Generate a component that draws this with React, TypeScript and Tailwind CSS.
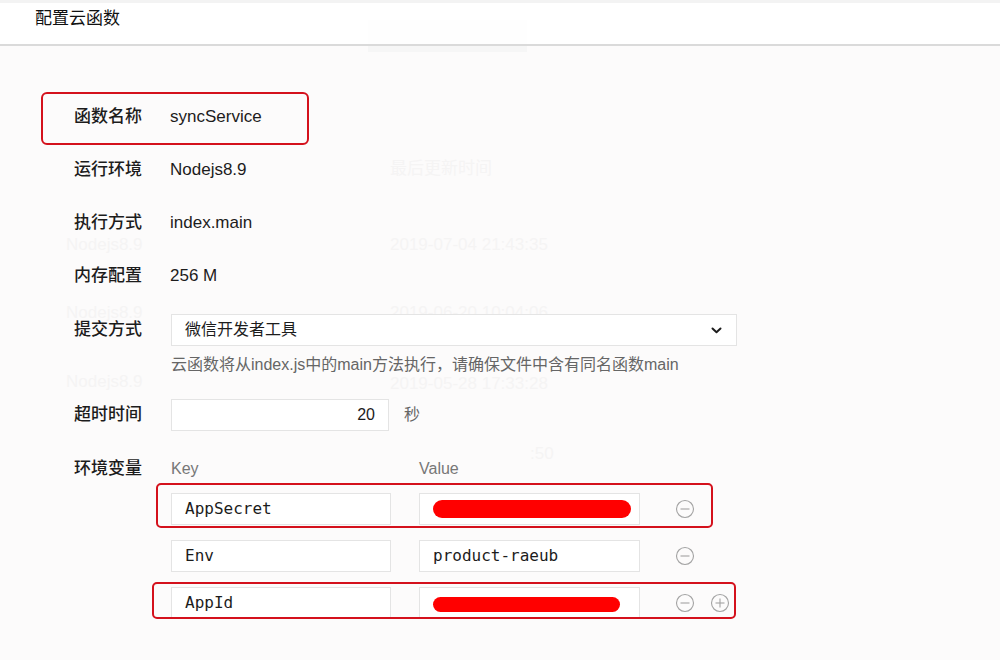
import React from 'react';

const cjk = { fontFamily: '"Liberation Sans", "Noto Sans CJK SC", sans-serif' };
const mono = { fontFamily: '"DejaVu Sans Mono", "Liberation Mono", monospace' };

interface EnvVar {
  key: string;
  value: string;
  redacted?: 'long' | 'short';
  canAdd?: boolean;
}

const envVars: EnvVar[] = [
  { key: 'AppSecret', value: '', redacted: 'long' },
  { key: 'Env', value: 'product-raeub' },
  { key: 'AppId', value: '', redacted: 'short', canAdd: true },
];

const infoRows = [
  { label: '函数名称', value: 'syncService' },
  { label: '运行环境', value: 'Nodejs8.9' },
  { label: '执行方式', value: 'index.main' },
  { label: '内存配置', value: '256 M' },
];

// faint text from the table behind the dialog
const ghosts = [
  { text: '最后更新时间', x: 390, y: 158 },
  { text: 'Nodejs8.9', x: 66, y: 234 },
  { text: '2019-07-04 21:43:35', x: 390, y: 234 },
  { text: 'Nodejs8.9', x: 66, y: 302 },
  { text: '2019-06-20 10:04:06', x: 390, y: 302 },
  { text: 'Nodejs8.9', x: 66, y: 371 },
  { text: '2019-05-28 17:33:28', x: 390, y: 373 },
  { text: ':50', x: 530, y: 443 },
];

function CircleIcon({ plus }: { plus?: boolean }) {
  return (
    <svg width="20" height="20" viewBox="0 0 20 20" fill="none" stroke="#a3a3a3" strokeWidth={1.1}>
      <circle cx="10" cy="10" r="8.5" />
      <line x1="5.5" y1="10" x2="14.5" y2="10" />
      {plus && <line x1="10" y1="5.5" x2="10" y2="14.5" />}
    </svg>
  );
}

function Label({ children }: { children: React.ReactNode }) {
  return (
    <div className="w-[96px] shrink-0 text-[17px] font-medium text-[#1c1c1c]" style={cjk}>
      {children}
    </div>
  );
}

export default function App() {
  return (
    <div className="relative w-[1000px] h-[660px] overflow-hidden bg-[#fcfbfb]" style={cjk}>
      {ghosts.map((g, i) => (
        <div
          key={i}
          className="absolute text-[17px] leading-[22px] text-[#f5f4f4] whitespace-nowrap"
          style={{ left: g.x, top: g.y }}
        >
          {g.text}
        </div>
      ))}
      <div className="absolute left-[368px] top-[20px] w-[159px] h-[32px] bg-[#f6f6f6]" />

      <div className="relative h-[46px] border-t-[3px] border-t-[#f3f3f3] border-b-2 border-b-[#dadada] bg-white/90 px-[35px] pt-[5px]">
        <div className="text-[17px] leading-[22px] text-[#111]">配置云函数</div>
      </div>

      <div className="relative pl-[74px] pt-[44px]">
        {infoRows.map((r) => (
          <div key={r.label} className="flex h-[53px] items-center">
            <Label>{r.label}</Label>
            <div className="text-[17px] text-[#1c1c1c]">{r.value}</div>
          </div>
        ))}

        <div className="mt-[12px] flex items-center">
          <Label>提交方式</Label>
          <div className="ml-[1px] flex h-[32px] w-[566px] items-center justify-between border border-[#e4e4e4] bg-white pl-[13px] pr-[14px]">
            <span className="text-[16px] text-[#1c1c1c]">微信开发者工具</span>
            <svg width="11" height="7" viewBox="0 0 11 7" fill="none" stroke="#1c1c1c" strokeWidth={2} strokeLinecap="round" strokeLinejoin="round">
              <polyline points="1.5,1.5 5.5,5.2 9.5,1.5" />
            </svg>
          </div>
        </div>
        <div className="mt-[8px] pl-[97px] text-[16px] leading-[22px] text-[#666]">
          云函数将从index.js中的main方法执行，请确保文件中含有同名函数main
        </div>

        <div className="mt-[23px] flex items-center">
          <Label>超时时间</Label>
          <div className="ml-[1px] flex h-[32px] w-[218px] items-center justify-end border border-[#e4e4e4] bg-white pr-[13px] text-[16px] text-[#1c1c1c]">
            20
          </div>
          <span className="ml-[15px] text-[16px] text-[#666]">秒</span>
        </div>

        <div className="mt-[27px] flex h-[22px] items-center">
          <Label>环境变量</Label>
          <div className="ml-[1px] w-[248px] text-[16px] text-[#777]">Key</div>
          <div className="text-[16px] text-[#777]">Value</div>
        </div>

        <div className="mt-[13px] flex flex-col gap-[15px] pl-[97px]">
          {envVars.map((v) => (
            <div key={v.key} className="flex items-center">
              <div className="flex h-[32px] w-[220px] items-center border border-[#e4e4e4] bg-white pl-[13px] text-[16px] text-[#1c1c1c]" style={mono}>
                {v.key}
              </div>
              <div className="relative ml-[28px] flex h-[32px] w-[221px] items-center border border-[#e4e4e4] bg-white pl-[13px] text-[16px] text-[#1c1c1c]" style={mono}>
                {v.value}
                {v.redacted === 'long' && (
                  <div className="absolute left-[13px] top-[6px] h-[18px] w-[198px] rounded-full bg-[#ff0000]" />
                )}
                {v.redacted === 'short' && (
                  <div className="absolute left-[13px] top-[9px] h-[15px] w-[187px] rounded-full bg-[#ff0000]" />
                )}
              </div>
              <div className="ml-[35px] flex items-center gap-[15px]">
                <CircleIcon />
                {v.canAdd && <CircleIcon plus />}
              </div>
            </div>
          ))}
        </div>
      </div>

      {/* annotation boxes */}
      <div className="absolute left-[41px] top-[92px] w-[268px] h-[53px] rounded-[6px] border-[2.5px] border-[#d4111c]" />
      <div className="absolute left-[156px] top-[483px] w-[557px] h-[45px] rounded-[5px] border-[2.5px] border-[#d4111c]" />
      <div className="absolute left-[152px] top-[582px] w-[584px] h-[37px] rounded-[5px] border-[2.5px] border-[#d4111c]" />
    </div>
  );
}
